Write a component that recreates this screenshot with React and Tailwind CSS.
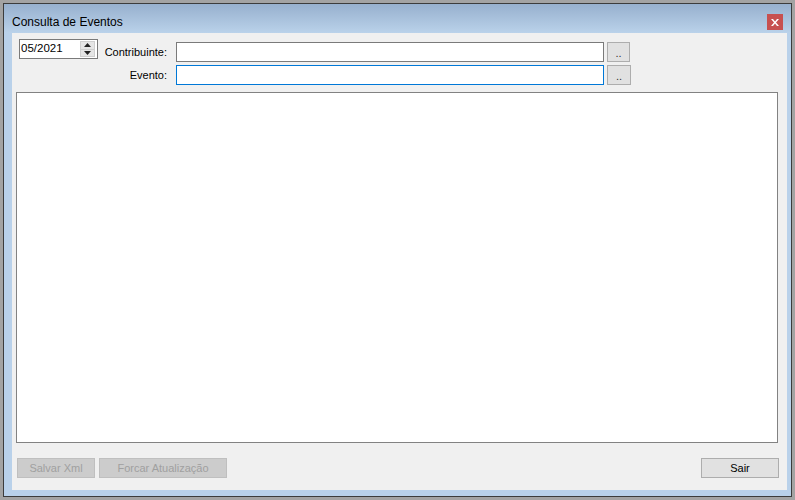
import React from 'react';

const font = { fontFamily: '"Liberation Sans", Arial, sans-serif' };

function Spinner() {
  return (
    <div className="flex flex-col w-[15px] h-[16px] mr-[2px]">
      <div className="flex-1 bg-[#e5e5e5] border border-[#cfcfcf] flex items-center justify-center">
        <svg width="7" height="4" viewBox="0 0 7 4"><path d="M3.5 0 L7 4 L0 4 Z" fill="#222" /></svg>
      </div>
      <div className="flex-1 bg-[#e5e5e5] border border-t-0 border-[#cfcfcf] flex items-center justify-center">
        <svg width="7" height="4" viewBox="0 0 7 4"><path d="M0 0 L7 0 L3.5 4 Z" fill="#222" /></svg>
      </div>
    </div>
  );
}

function DotsButton({ wide }) {
  return (
    <button className={`${wide ? 'w-[24px]' : 'w-[23px]'} h-[20px] bg-[#e1e1e1] border border-[#adadad] text-[11px] leading-none text-[#333] flex items-center justify-center pt-[2px]`}>
      ..
    </button>
  );
}

export default function App() {
  return (
    <div style={font} className="w-[795px] h-[500px] bg-[#a3a3a3] border-[3px] border-[#a3a3a3] text-[11px] text-black">
      <div className="w-full h-full border border-[#3c3c3c] flex flex-col bg-[#b9d1ea]">
        <div className="h-[29px] flex items-center justify-between pl-[8px] pr-[8px] pt-[7px] bg-gradient-to-b from-[#97b0ce] to-[#bad2ea]">
          <span className="text-[12px]">Consulta de Eventos</span>
          <div className="w-[16px] h-[16px] bg-[#c75050] flex items-center justify-center">
            <svg width="8" height="7" viewBox="0 0 8 7">
              <path d="M0 0h2l2 2.5L6 0h2L5 3.5 8 7H6L4 4.5 2 7H0l3-3.5z" fill="#fff" />
            </svg>
          </div>
        </div>
        <div className="flex-1 ml-[8px] mr-[4px] mb-[6px] bg-[#f0f0f0] flex flex-col">
          <div className="flex pl-[7px] pt-[6px]">
            <div className="w-[79px] h-[20px] bg-white border border-[#7a7a7a] flex items-center justify-between">
              <span className="pl-[1px] text-[11.5px]">05/2021</span>
              <Spinner />
            </div>
            <div className="flex flex-col gap-[3px] mt-[3px]">
              <div className="flex items-center">
                <span className="w-[69px] text-right">Contribuinte:</span>
                <div className="ml-[9px] w-[428px] h-[20px] bg-white border border-[#7a7a7a]" />
                <div className="ml-[3px]"><DotsButton /></div>
              </div>
              <div className="flex items-center">
                <span className="w-[69px] text-right">Evento:</span>
                <div className="ml-[9px] w-[428px] h-[20px] bg-white border border-[#0078d7]" />
                <div className="ml-[3px]"><DotsButton wide /></div>
              </div>
            </div>
          </div>
          <div className="mt-[7px] ml-[4px] w-[762px] h-[351px] bg-white border border-[#828282]" />
          <div className="mt-[15px] flex items-center pl-[5px] pr-[8px]">
            <button className="w-[78px] h-[20px] bg-[#cccccc] border border-[#bfbfbf] text-[#a0a0a0]">Salvar Xml</button>
            <button className="ml-[4px] w-[128px] h-[20px] bg-[#cccccc] border border-[#bfbfbf] text-[#a0a0a0]">Forcar Atualização</button>
            <button className="ml-auto w-[78px] h-[20px] bg-[#e1e1e1] border border-[#adadad]">Sair</button>
          </div>
        </div>
      </div>
    </div>
  );
}
